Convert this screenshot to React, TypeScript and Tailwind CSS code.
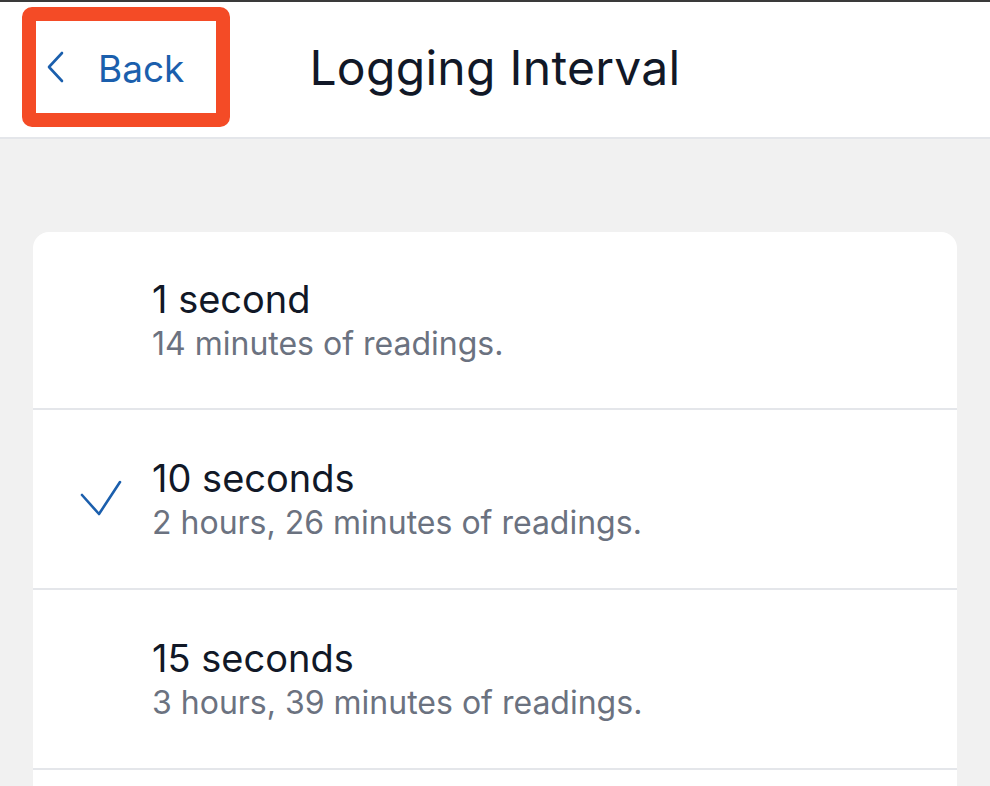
interface IntervalOption {
  label: string;
  detail: string;
  selected?: boolean;
}

const options: IntervalOption[] = [
  { label: '1 second', detail: '14 minutes of readings.' },
  { label: '10 seconds', detail: '2 hours, 26 minutes of readings.', selected: true },
  { label: '15 seconds', detail: '3 hours, 39 minutes of readings.' },
];

function BackChevron() {
  return (
    <svg width="20" height="32" viewBox="0 0 20 32" fill="none" className="shrink-0">
      <path d="M16 2 L3 16 L16 30" stroke="#1b5fad" strokeWidth="2.6" strokeLinecap="round" strokeLinejoin="round" />
    </svg>
  );
}

function CheckMark() {
  return (
    <svg width="44" height="38" viewBox="0 0 44 38" fill="none">
      <path d="M3 16 L20 35 L41 3" stroke="#1b5fad" strokeWidth="2.6" strokeLinecap="round" strokeLinejoin="round" />
    </svg>
  );
}

export default function App() {
  return (
    <div className="h-[786px] w-[990px] overflow-hidden bg-[#f1f1f1] font-['Inter',sans-serif]">
      <header className="grid h-[139px] grid-cols-[1fr_auto_1fr] items-center border-t-2 border-b-2 border-t-[#3a3a3a] border-b-[#e4e6ea] bg-white">
        <div className="flex">
          <button className="ml-[22px] mt-[-6px] flex h-[120px] w-[208px] items-center rounded-[10px] border-[14px] border-[#f44b26] bg-white pl-[10px]">
            <BackChevron />
            <span className="ml-[32px] mt-[4px] text-[37px] leading-none text-[#1b5fad]">Back</span>
          </button>
        </div>
        <h1 className="mt-[-4px] text-[48px] font-normal leading-none tracking-[0.3px] text-[#111827]">Logging Interval</h1>
        <div />
      </header>

      <main className="px-[33px] pt-[93px]">
        <ul className="overflow-hidden rounded-[16px] bg-white">
          {options.map((opt, i) => (
            <li
              key={opt.label}
              className={`flex items-center ${i > 0 ? 'h-[180px] border-t-2 border-[#e4e6ea]' : 'h-[176px]'}`}
            >
              <div className="flex w-[119px] justify-end pr-[29px] pb-[2px]">
                {opt.selected ? <CheckMark /> : null}
              </div>
              <div className="flex flex-col pt-[2px]">
                <span className="text-[38px] leading-[46px] text-[#111827]">{opt.label}</span>
                <span className="text-[32px] leading-[44px] text-[#6b7280]">{opt.detail}</span>
              </div>
            </li>
          ))}
          <li className="h-[180px] border-t-2 border-[#e4e6ea]" />
        </ul>
      </main>
    </div>
  );
}
